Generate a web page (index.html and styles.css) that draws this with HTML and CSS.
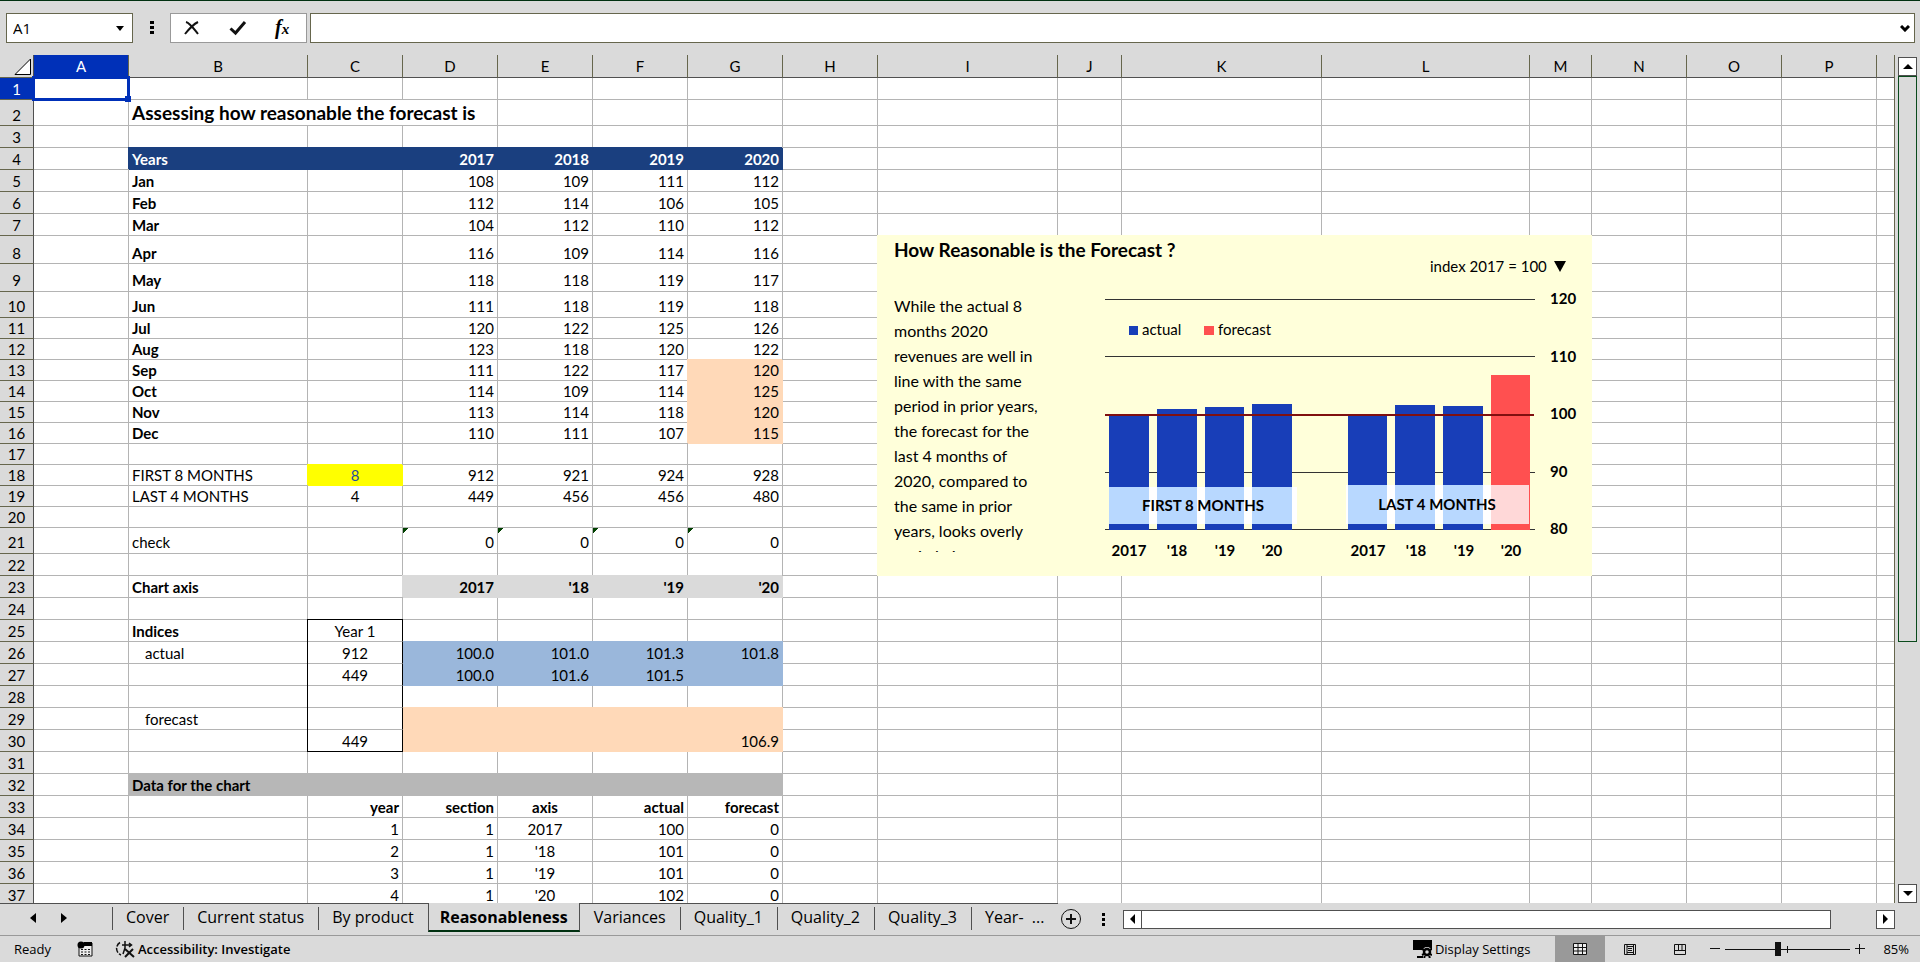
FILE: index.html
```html
<!DOCTYPE html>
<html lang="en">
<head>
    <meta charset="UTF-8">
    <meta name="viewport" content="width=device-width, initial-scale=1.0">
    <title>Reasonableness</title>
    <link rel="stylesheet" href="styles.css">
</head>
<body>
    <!-- Formula bar -->
    <div class="formula-bar">
        <div class="name-box">
            <input type="text" class="name-input" value="A1" aria-label="Name box">
            <button class="icon-btn name-arrow" aria-label="Open name list">
                <svg width="8" height="5"><path d="M0 0h8L4 5z"/></svg>
            </button>
        </div>
        <svg class="grip" width="4" height="16"><path d="M0 1h4v3H0zM0 6h4v3H0zM0 11h4v3H0z"/></svg>
        <div class="formula-actions">
            <button class="icon-btn" aria-label="Cancel">
                <svg width="18" height="16" fill="none" stroke="#111" stroke-width="2"><path d="M3 2c4 1 8 7 12 12M15 2C11 4 6 9 2 14"/></svg>
            </button>
            <button class="icon-btn" aria-label="Enter">
                <svg width="18" height="16" fill="none" stroke="#111" stroke-width="3"><path d="M1.500 8.500l5 4.500L16 2"/></svg>
            </button>
            <button class="icon-btn fx" aria-label="Insert function"><i>f<small>x</small></i></button>
        </div>
        <div class="formula-box">
            <input type="text" class="formula-input" aria-label="Formula">
            <button class="icon-btn" aria-label="Expand formula bar">
                <svg width="10" height="7" fill="none" stroke="#000" stroke-width="3"><path d="M1 1l4 4 4-4"/></svg>
            </button>
        </div>
    </div>

    <!-- Worksheet -->
    <main class="workspace">
        <div class="sheet">
            <table class="grid" id="grid"></table>
        </div>
        <div class="v-scroll">
            <button class="scroll-btn" aria-label="Scroll up"><svg width="10" height="5"><path d="M0 5h10L5 0z"/></svg></button>
            <div class="v-track"><div class="v-thumb"></div></div>
            <button class="scroll-btn" aria-label="Scroll down"><svg width="10" height="5"><path d="M0 0h10L5 5z"/></svg></button>
        </div>
    </main>

    <!-- Sheet tabs -->
    <div class="tab-bar">
        <div class="tab-nav">
            <button class="icon-btn" aria-label="Previous sheet"><svg width="6" height="10"><path d="M6 0v10L0 5z"/></svg></button>
            <button class="icon-btn" aria-label="Next sheet"><svg width="6" height="10"><path d="M0 0v10l6-5z"/></svg></button>
        </div>
        <nav class="tabs">
            <button class="tab">Cover</button>
            <button class="tab">Current status</button>
            <button class="tab">By product</button>
            <button class="tab active">Reasonableness</button>
            <button class="tab">Variances</button>
            <button class="tab">Quality_1</button>
            <button class="tab">Quality_2</button>
            <button class="tab">Quality_3</button>
            <button class="tab">Year- &nbsp;...</button>
        </nav>
        <button class="icon-btn add-sheet" aria-label="New sheet">
            <svg width="22" height="22" fill="none" stroke="#111"><circle cx="11" cy="11" r="9.500"/><path d="M11 6v10M6 11h10" stroke-width="2"/></svg>
        </button>
        <svg class="tab-grip" width="3" height="14"><path d="M0 1h3v3H0zM0 6h3v3H0zM0 11h3v3H0z"/></svg>
        <div class="h-scroll">
            <button class="scroll-btn" aria-label="Scroll left"><svg width="5" height="10"><path d="M5 0v10L0 5z"/></svg></button>
            <div class="h-track"><div class="h-thumb"></div></div>
            <button class="scroll-btn" aria-label="Scroll right"><svg width="5" height="10"><path d="M0 0v10l5-5z"/></svg></button>
        </div>
    </div>

    <!-- Status bar -->
    <footer class="status-bar">
        <span class="ready">Ready</span>
        <button class="icon-btn macro" aria-label="Record macro">
            <svg width="16" height="16"><path d="M2 2h13v13H2z" fill="#eee" stroke="#111"/><path d="M7 1h8v4H7z"/><circle cx="4" cy="4" r="3.500"/><path d="M4 8.500h10M4 11h10M4 13.500h10" stroke="#111" stroke-dasharray="2 1.500"/></svg>
        </button>
        <button class="status-btn access">
            <svg width="20" height="18" fill="none" stroke="#111" stroke-width="1.500"><path d="M5 2.500A7 7 0 0 0 6 15" stroke-dasharray="5 1.500"/><path d="M7 5h9M10 1v7l-2 6M14 3l2.500 2L14 7"/><path d="M10 9l9 8M18 9l-8 8" stroke-width="2"/></svg>
            Accessibility: Investigate
        </button>
        <div class="status-right">
            <button class="status-btn display">
                <svg width="19" height="18"><path d="M0 0h19v10H0zM4 16h6v2H4z"/><circle cx="14" cy="12" r="5" fill="#dadada"/><circle cx="14" cy="12" r="3" fill="none" stroke="#000" stroke-width="2.500"/><path d="M9 9l2 1M9 15l2-1M19 9l-2 1M19 15l-2-1M11 18l1-2M17 18l-1-2" stroke="#000" stroke-width="2"/></svg>
                Display Settings
            </button>
            <button class="view-btn active" aria-label="Normal view">
                <svg width="14" height="13" fill="#eee" stroke="#111"><path d="M.5.5h13v11H.500zM.5 4.500h13M.5 8h13M5 .500v11M9.500.500v11"/></svg>
            </button>
            <button class="view-btn" aria-label="Page layout">
                <svg width="12" height="11" fill="none" stroke="#111"><path d="M.5.5h11v10H.500zM3 .500v10M9.500.500v10M3 2.500h6.500M4 4.500h4M4 6.500h4M3 8.500h6.500"/></svg>
            </button>
            <button class="view-btn" aria-label="Page break preview">
                <svg width="12" height="11" fill="none" stroke="#111"><path d="M.5.5h11v10H.500z"/><path d="M4.500 0v6M8 0v6M1 6.500h10"/></svg>
            </button>
            <button class="icon-btn zoom-btn" aria-label="Zoom out"><svg width="10" height="10" stroke="#111"><path d="M0 4.500h10"/></svg></button>
            <input type="range" class="zoom-slider" min="0" max="100" value="42" aria-label="Zoom">
            <button class="icon-btn zoom-btn" aria-label="Zoom in"><svg width="10" height="10" stroke="#111"><path d="M0 4.500h10M4.500 0v10"/></svg></button>
            <span class="zoom-value">85%</span>
        </div>
    </footer>

    <!-- Chart object, anchored to cell I8 -->
    <template id="chartTemplate">
        <div class="chart">
            <h2 class="chart-title">How Reasonable is the Forecast ?</h2>
            <p class="chart-note">While the actual 8 months 2020 revenues are well in line with the same period in prior years, the forecast for the last 4 months of 2020, compared to the same in prior years, looks overly optimistic.</p>
            <svg class="plot" viewBox="0 0 497 316" width="497" height="316">
                <text x="335" y="12">index 2017 = 100</text>
                <path d="M459 1h12l-6 11z"/>
                <path class="gridlines" d="M10 39.500h430M10 96.500h430M10 212.500h430M10 269.500h430"/>
                <rect class="actual" x="34" y="66" width="9" height="9"/>
                <text x="47" y="75">actual</text>
                <rect class="forecast" x="109" y="66" width="10" height="9"/>
                <text x="123" y="75">forecast</text>

                <g class="actual">
                    <rect x="14" y="155" width="40" height="115"/>
                    <rect x="62" y="149" width="40" height="121"/>
                    <rect x="110" y="147" width="39" height="123"/>
                    <rect x="157" y="144" width="40" height="126"/>
                    <rect x="253" y="155" width="39" height="115"/>
                    <rect x="300" y="145" width="40" height="125"/>
                    <rect x="348" y="146" width="40" height="124"/>
                </g>
                <rect class="forecast" x="396" y="115" width="39" height="155"/>
                <path class="base-line" d="M10 155h429"/>

                <!-- Translucent section labels -->
                <path fill="#fff" d="M14 227h188v37H14zM251 225h183v39H251z"/>
                <path fill="#b8d8ff" d="M14 227h40v37H14zM62 227h40v37H62zM110 227h39v37h-39zM157 227h40v37h-40zM253 225h39v39h-39zM300 225h40v39h-40zM348 225h40v39h-40z"/>
                <path fill="#ffd8d8" d="M396 225h38v39h-38z"/>
                <g class="strong mid">
                    <text x="108" y="251">FIRST 8 MONTHS</text>
                    <text x="342" y="250">LAST 4 MONTHS</text>
                    <text x="34" y="296">2017</text>
                    <text x="82" y="296">'18</text>
                    <text x="130" y="296">'19</text>
                    <text x="177" y="296">'20</text>
                    <text x="273" y="296">2017</text>
                    <text x="321" y="296">'18</text>
                    <text x="369" y="296">'19</text>
                    <text x="416" y="296">'20</text>
                </g>
                <g class="strong">
                    <text x="455" y="44">120</text>
                    <text x="455" y="102">110</text>
                    <text x="455" y="159">100</text>
                    <text x="455" y="217">90</text>
                    <text x="455" y="274">80</text>
                </g>
            </svg>
        </div>
    </template>

    <script src="sheet.js"></script>
</body>
</html>
```

FILE: styles.css
```css
* {
    margin: 0;
    padding: 0;
    box-sizing: border-box;
}

body {
    display: flex;
    flex-direction: column;
    height: 100vh;
    overflow: hidden;
    background: #dadada;
    color: #000;
    font-family: Lato, "Open Sans", sans-serif;
    font-size: 15px;
}

button,
input {
    font: inherit;
    color: inherit;
}

button {
    border: none;
    background: none;
}

svg {
    display: block;
}

.icon-btn {
    display: flex;
    align-items: center;
    justify-content: center;
}

/* Formula bar */
.formula-bar {
    display: flex;
    align-items: center;
    height: 55px;
    padding: 0 5px 0 6px;
    border-top: 1px solid #003010;
    font-family: "Open Sans", sans-serif;
    flex: none;
}

.name-box,
.formula-box {
    display: flex;
    align-items: center;
    height: 30px;
    background: #fff;
    border: 1px solid #66664d;
}

.name-box {
    width: 127px;
    padding: 0 8px 0 6px;
}

.name-input,
.formula-input {
    flex: 1;
    min-width: 0;
    border: none;
    outline: none;
    background: none;
    font-size: 15px;
}

.grip {
    margin: 0 16px 0 17px;
}

.formula-actions {
    display: flex;
    align-items: center;
    gap: 28px;
    width: 137px;
    height: 30px;
    padding-left: 12px;
    margin-right: 3px;
    background: #fff;
    border: 1px solid #999;
}

.fx {
    font-family: "Liberation Serif", serif;
    font-size: 20px;
    font-weight: bold;
    line-height: 20px;
}

.fx small {
    font-size: 15px;
}

.formula-box {
    flex: 1;
    padding: 0 4px;
}

/* Worksheet */
.workspace {
    display: flex;
    flex: 1;
    min-height: 0;
}

.sheet {
    flex: 1;
    min-width: 0;
    overflow: hidden;
}

.grid {
    width: 100%;
    table-layout: fixed;
    border-collapse: separate;
    border-spacing: 0;
    border-right: 1px solid #66664d;
}

.col-head { width: 34px; }
.col-std { width: 95px; }
.col-b { width: 179px; }
.col-i { width: 180px; }
.col-j { width: 64px; }
.col-k { width: 200px; }
.col-l { width: 208px; }
.col-m { width: 62px; }

.grid tr { height: 22px; }
.grid .h21 { height: 21px; }
.grid .h23 { height: 23px; }
.grid .h26 { height: 26px; }
.grid .h28 { height: 28px; }

.grid td,
.grid th {
    line-height: 20px;
    white-space: nowrap;
    vertical-align: bottom;
}

.grid td {
    padding: 0 3px;
    background: #fff;
    border-right: 1px solid #b4b4b4;
    border-bottom: 1px solid #b4b4b4;
}

.grid th {
    font-weight: normal;
    text-align: center;
    background: #dadada;
    border-right: 1px solid #66664d;
    border-bottom: 1px solid #66664d;
}

.grid thead th {
    padding-bottom: 1px;
    border-bottom-color: #505050;
}

.grid .lifted td,
.grid .lifted th {
    padding-bottom: 1px;
}

.grid tbody th {
    border-right-color: #505050;
}

.grid thead th:last-child,
.grid tbody td:last-child {
    border-right: none;
}

.grid .corner {
    border-color: #dadada #505050 #66664d #dadada;
}

.corner svg {
    margin-left: 14px;
}

.grid .selected {
    background: #0030b8;
    color: #fff;
}

.grid .num { text-align: right; }
.grid .center { text-align: center; }
.grid .bold { font-weight: bold; }
.grid .indent { padding-left: 16px; }
.grid .input { color: #1f4e9e; }

.grid .title {
    font-size: 19px;
    font-weight: bold;
    line-height: 24px;
}

/* A fill also covers the gridlines above and to the left of the cell */
.fill {
    border-color: var(--fill) !important;
    background: var(--fill) !important;
    box-shadow: -1px -1px 0 var(--fill);
}

.fill-top {
    box-shadow: 0 -1px 0 var(--fill);
}

.navy { --fill: #1a3f7f; color: #fff; }
.peach { --fill: #ffd9b8; }
.yellow { --fill: #ffff00; }
.silver { --fill: #dadada; }
.blue { --fill: #9ab7db; }
.gray { --fill: #b7b7b7; }

.grid .flagged {
    background: linear-gradient(135deg, #004000 4px, #fff 4px);
}

.grid .boxed {
    border-right-color: #000;
    box-shadow: -1px 0 0 #000;
}

.grid .boxed-first {
    box-shadow: -1px 0 0 #000, 0 -1px 0 #000, -1px -1px 0 #000;
}

.grid .boxed-last {
    border-bottom-color: #000;
}

.anchor {
    position: relative;
}

.selection {
    position: absolute;
    inset: -2px;
    border: 3px solid #0030b8;
}

.selection::after {
    content: "";
    position: absolute;
    right: -4px;
    bottom: -4px;
    width: 6px;
    height: 6px;
    background: #0030b8;
}

/* Chart object */
.chart {
    position: absolute;
    top: -1px;
    left: -1px;
    z-index: 1;
    display: grid;
    grid-template-columns: 218px 497px;
    grid-template-rows: 20px 316px;
    padding-top: 5px;
    background: #ffffda;
}

.chart-title {
    grid-column: span 2;
    padding-left: 17px;
    font-size: 19px;
    line-height: 20px;
}

.chart-note {
    width: 154px;
    height: 259px;
    margin: 33px 0 0 17px;
    overflow: hidden;
    font-size: 16px;
    line-height: 25px;
    white-space: normal;
}

.plot { overflow: visible; }
.plot text { font-size: 15px; }
.plot .strong { font-weight: bold; }
.plot .mid { text-anchor: middle; }
.plot .actual { fill: #183eb8; }
.plot .forecast { fill: #ff5050; }
.gridlines { stroke: #333; }
.base-line { stroke: #801010; stroke-width: 2; }

/* Scroll bars */
.scroll-btn {
    display: flex;
    align-items: center;
    justify-content: center;
    width: 19px;
    height: 19px;
    flex: none;
    background: #fff;
    border: 1px solid #505050;
}

.v-scroll {
    display: flex;
    flex-direction: column;
    padding: 2px 3px 0;
}

.v-track {
    flex: 1;
}

.v-thumb {
    height: 70%;
    border: 1px solid #0a4a1c;
}

.h-scroll {
    display: flex;
    flex: 1;
    margin-right: 25px;
}

.h-track {
    flex: 1;
}

.h-thumb {
    width: 94%;
    height: 19px;
    margin-left: -1px;
    background: #fff;
    border: 1px solid #505050;
}

/* Sheet tabs */
.tab-bar {
    display: flex;
    align-items: center;
    height: 33px;
    flex: none;
    border-bottom: 1px solid #999;
    font-family: "Open Sans", sans-serif;
}

.tab-nav,
.tabs {
    display: flex;
    align-self: flex-start;
    height: 29px;
}

.tab-nav {
    width: 112px;
    gap: 25px;
    padding-left: 30px;
    border-top: 1px solid #505050;
}

.tab {
    height: 29px;
    padding: 0 14px 2px;
    border-top: 1px solid #505050;
    background: linear-gradient(#505050, #505050) 0 3px / 1px 23px no-repeat;
    font-size: 16px;
    white-space: nowrap;
}

.tab.active {
    border-top: none;
    border-left: 1px solid #505050;
    border-right: 1px solid #505050;
    border-bottom: 2px solid #003010;
    padding: 1px 11px 1px;
    background: none;
    font-weight: bold;
}

.tab.active + .tab {
    background: none;
}

.add-sheet {
    margin-left: 2px;
}

.tab-grip {
    margin: 0 18px 0 20px;
}

/* Status bar */
.status-bar {
    display: flex;
    align-items: center;
    height: 26px;
    flex: none;
    padding-left: 14px;
    font-family: "Open Sans", sans-serif;
    font-size: 13px;
}

.macro {
    margin: 0 22px 0 26px;
}

.status-btn {
    display: flex;
    align-items: center;
    gap: 3px;
}

.access {
    font-weight: 600;
}

.status-right {
    display: flex;
    align-items: center;
    margin-left: auto;
    padding-right: 11px;
}

.display {
    margin-right: 25px;
}

.view-btn {
    display: flex;
    align-items: center;
    justify-content: center;
    width: 50px;
    height: 26px;
}

.view-btn.active {
    background: #999;
}

.zoom-btn {
    width: 20px;
}

.zoom-slider {
    appearance: none;
    width: 125px;
    height: 14px;
    background:
        linear-gradient(#111, #111) 62px 4px / 1px 7px no-repeat,
        linear-gradient(#111, #111) 0 7px / 100% 1px no-repeat;
}

.zoom-slider::-webkit-slider-thumb {
    appearance: none;
    width: 6px;
    height: 14px;
    background: #111;
}

.zoom-value {
    margin-left: 13px;
}
```

FILE: sheet.js
```js
// Column letters; the last, unnamed column takes the remaining width
const COLS = ['A', 'B', 'C', 'D', 'E', 'F', 'G', 'H', 'I', 'J', 'K', 'L', 'M', 'N', 'O', 'P', ''];
const WIDTHS = { B: 'col-b', I: 'col-i', J: 'col-j', K: 'col-k', L: 'col-l', M: 'col-m' };

// Cell contents by row: column -> [text, classes]
const cells = {};
for (let r = 1; r <= 37; r++) cells[r] = {};

// Fill D..G of a row with values
function values(row, list, cls = 'num') {
    list.forEach((v, i) => { cells[row]['DEFG'[i]] = [v, cls]; });
}

cells[1].A = ['<div class="selection"></div>', 'anchor'];
cells[2].B = ['Assessing how reasonable the forecast is', 'title', 3];

cells[4].B = ['Years', 'bold fill navy'];
cells[4].C = ['', 'fill navy'];
values(4, [2017, 2018, 2019, 2020], 'num bold fill navy');

const months = [
    ['Jan', 108, 109, 111, 112],
    ['Feb', 112, 114, 106, 105],
    ['Mar', 104, 112, 110, 112],
    ['Apr', 116, 109, 114, 116],
    ['May', 118, 118, 119, 117],
    ['Jun', 111, 118, 119, 118],
    ['Jul', 120, 122, 125, 126],
    ['Aug', 123, 118, 120, 122],
    ['Sep', 111, 122, 117, 120],
    ['Oct', 114, 109, 114, 125],
    ['Nov', 113, 114, 118, 120],
    ['Dec', 110, 111, 107, 115]
];
months.forEach(([name, ...nums], i) => {
    cells[5 + i].B = [name, 'bold'];
    values(5 + i, nums);
    if (i >= 8) cells[5 + i].G[1] = 'num fill peach';
});

cells[8].I = [document.getElementById('chartTemplate').innerHTML, 'anchor'];

cells[18].B = ['FIRST 8 MONTHS', ''];
cells[18].C = [8, 'center input fill yellow'];
values(18, [912, 921, 924, 928]);
cells[19].B = ['LAST 4 MONTHS', ''];
cells[19].C = [4, 'center'];
values(19, [449, 456, 456, 480]);

cells[21].B = ['check', ''];
values(21, [0, 0, 0, 0], 'num flagged');

cells[23].B = ['Chart axis', 'bold'];
values(23, ['2017', "'18", "'19", "'20"], 'num bold fill silver');

cells[25].B = ['Indices', 'bold'];
cells[26].B = ['actual', 'indent'];
cells[29].B = ['forecast', 'indent'];
['Year 1', 912, 449, '', '', 449].forEach((v, i) => {
    const edge = i === 0 ? ' boxed-first' : i === 5 ? ' boxed-last' : '';
    cells[25 + i].C = [v, 'center boxed' + edge];
});
values(26, ['100.0', '101.0', '101.3', '101.8'], 'num fill fill-top blue');
values(27, ['100.0', '101.6', '101.5', ''], 'num fill fill-top blue');
values(29, ['', '', '', ''], 'num fill fill-top peach');
values(30, ['', '', '', '106.9'], 'num fill fill-top peach');

cells[32].B = ['Data for the chart', 'bold fill gray'];
cells[32].C = ['', 'fill gray'];
values(32, ['', '', '', ''], 'fill gray');

cells[33].C = ['year', 'num bold'];
values(33, ['section', 'axis', 'actual', 'forecast'], 'num bold');
cells[33].E[1] = 'center bold';
[['2017', 100], ["'18", 101], ["'19", 101], ["'20", 102]].forEach(([axis, actual], i) => {
    cells[34 + i].C = [i + 1, 'num'];
    values(34 + i, [1, axis, actual, 0]);
    cells[34 + i].E[1] = 'center';
});

function rowClass(r) {
    if (r === 8) return 'h28';
    if (r === 9) return 'h28 lifted';
    if (r === 2) return 'h26';
    if (r === 10 || r === 21) return 'h26 lifted';
    if (r > 10 && r < 21) return 'h21';
    return '';
}

let html = '<colgroup><col class="col-head">';
COLS.forEach(c => { html += c ? `<col class="${WIDTHS[c] || 'col-std'}">` : '<col>'; });
html += '</colgroup><thead><tr class="h23"><th class="corner"><svg width="18" height="18"><path d="M16.500 1v15.500H1z" fill="#fff" stroke="#000"/></svg></th>';
COLS.forEach(c => { html += `<th${c === 'A' ? ' class="selected"' : ''}>${c}</th>`; });
html += '</tr></thead><tbody>';

for (let r = 1; r <= 37; r++) {
    html += `<tr class="${rowClass(r)}"><th${r === 1 ? ' class="selected"' : ''}>${r}</th>`;
    for (let i = 0; i < COLS.length; i++) {
        const [text, cls, span] = cells[r][COLS[i]] || ['', ''];
        html += `<td class="${cls}"${span ? ` colspan="${span}"` : ''}>${text}</td>`;
        if (span) i += span - 1;
    }
    html += '</tr>';
}

document.getElementById('grid').innerHTML = html + '</tbody>';
```
